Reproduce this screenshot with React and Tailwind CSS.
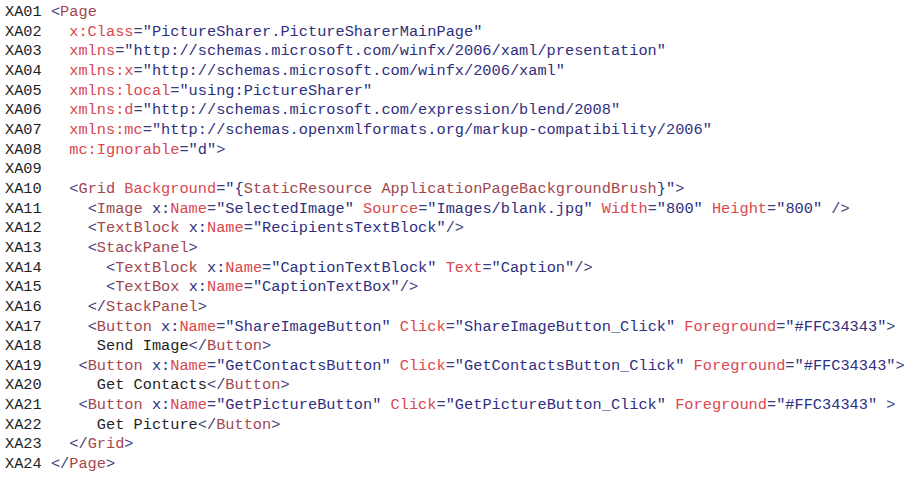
const SOURCE = [
  ["XA01", " ", '<Page'],
  ["XA02", "   ", 'x:Class="PictureSharer.PictureSharerMainPage"'],
  ["XA03", "   ", 'xmlns="http://schemas.microsoft.com/winfx/2006/xaml/presentation"'],
  ["XA04", "   ", 'xmlns:x="http://schemas.microsoft.com/winfx/2006/xaml"'],
  ["XA05", "   ", 'xmlns:local="using:PictureSharer"'],
  ["XA06", "   ", 'xmlns:d="http://schemas.microsoft.com/expression/blend/2008"'],
  ["XA07", "   ", 'xmlns:mc="http://schemas.openxmlformats.org/markup-compatibility/2006"'],
  ["XA08", "   ", 'mc:Ignorable="d">'],
  ["XA09", "", ""],
  ["XA10", "   ", '<Grid Background="{StaticResource ApplicationPageBackgroundBrush}">'],
  ["XA11", "     ", '<Image x:Name="SelectedImage" Source="Images/blank.jpg" Width="800" Height="800" />'],
  ["XA12", "     ", '<TextBlock x:Name="RecipientsTextBlock"/>'],
  ["XA13", "     ", "<StackPanel>"],
  ["XA14", "       ", '<TextBlock x:Name="CaptionTextBlock" Text="Caption"/>'],
  ["XA15", "       ", '<TextBox x:Name="CaptionTextBox"/>'],
  ["XA16", "     ", "</StackPanel>"],
  ["XA17", "     ", '<Button x:Name="ShareImageButton" Click="ShareImageButton_Click" Foreground="#FFC34343">'],
  ["XA18", "      ", "Send Image</Button>"],
  ["XA19", "    ", '<Button x:Name="GetContactsButton" Click="GetContactsButton_Click" Foreground="#FFC34343">'],
  ["XA20", "      ", "Get Contacts</Button>"],
  ["XA21", "    ", '<Button x:Name="GetPictureButton" Click="GetPictureButton_Click" Foreground="#FFC34343" >'],
  ["XA22", "      ", "Get Picture</Button>"],
  ["XA23", "   ", "</Grid>"],
  ["XA24", " ", "</Page>"],
];

const COLORS = {
  brk: "text-[#3d3d7e]",
  tag: "text-[#a3474e]",
  attr: "text-[#d9474f]",
  val: "text-[#2f2f80]",
  text: "text-[#1f1f1f]",
};

// split each line into coloured pieces; inTag carries over from <Page ... >
const tokenize = (lines) => {
  let inTag = false;
  return lines.map((code) => {
    const out = [];
    const re = /(<\/?|\/?>)|("[^"]*")|(=)|([A-Za-z_][\w:.]*)|(\s+)|([^<"=\s]+)/g;
    let afterOpen = false;
    let m;
    while ((m = re.exec(code))) {
      const [tok, bracket, quoted, eq, word] = m;
      if (bracket) {
        out.push(["brk", tok]);
        inTag = bracket.startsWith("<");
        afterOpen = inTag;
      } else if (quoted) {
        if (quoted.startsWith('"{')) {
          out.push(["val", '"{'], ["tag", quoted.slice(2, -2)], ["val", '}"']);
        } else {
          out.push(["val", quoted]);
        }
      } else if (eq) {
        out.push([inTag ? "brk" : "text", tok]);
      } else if (word) {
        if (!inTag) out.push(["text", tok]);
        else if (afterOpen) {
          out.push(["tag", tok]);
          afterOpen = false;
        } else if (tok.startsWith("x:") && tok !== "x:Class") {
          out.push(["val", "x:"], ["attr", tok.slice(2)]);
        } else out.push(["attr", tok]);
      } else {
        out.push(["text", tok]);
      }
    }
    return out;
  });
};

export default function App() {
  const tokens = tokenize(SOURCE.map((line) => line[2]));

  return (
    <div className="h-[478px] w-[912px] overflow-hidden bg-white px-[5px] pt-[3px] font-['Liberation_Mono',monospace] text-[15.3px] leading-[19.65px]">
      {SOURCE.map(([num, indent], i) => (
        <div key={num} className="whitespace-pre">
          <span className="text-[#1f1f1f]">{num}</span>
          <span>{indent}</span>
          {tokens[i].map(([kind, text], j) => (
            <span key={j} className={COLORS[kind]}>
              {text}
            </span>
          ))}
        </div>
      ))}
    </div>
  );
}
